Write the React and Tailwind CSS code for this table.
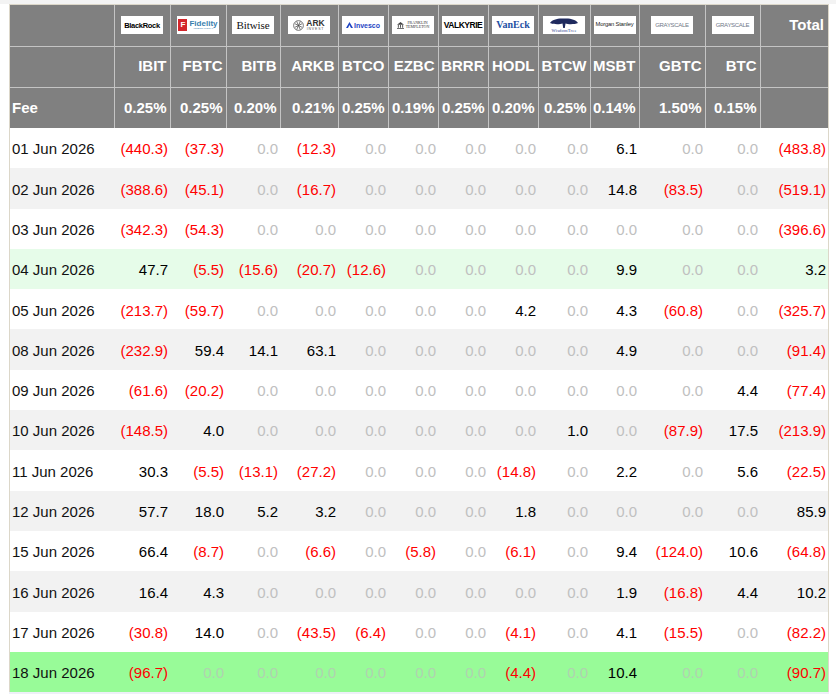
const funds = [
  { ticker: "IBIT", fee: "0.25%", w: "w-[56px]", logo: "blackrock" },
  { ticker: "FBTC", fee: "0.25%", w: "w-[56px]", logo: "fidelity" },
  { ticker: "BITB", fee: "0.20%", w: "w-[54px]", logo: "bitwise" },
  { ticker: "ARKB", fee: "0.21%", w: "w-[58px]", logo: "ark" },
  { ticker: "BTCO", fee: "0.25%", w: "w-[50px]", logo: "invesco" },
  { ticker: "EZBC", fee: "0.19%", w: "w-[50px]", logo: "franklin" },
  { ticker: "BRRR", fee: "0.25%", w: "w-[50px]", logo: "valkyrie" },
  { ticker: "HODL", fee: "0.20%", w: "w-[50px]", logo: "vaneck" },
  { ticker: "BTCW", fee: "0.25%", w: "w-[52px]", logo: "wisdomtree" },
  { ticker: "MSBT", fee: "0.14%", w: "w-[49px]", logo: "morgan" },
  { ticker: "GBTC", fee: "1.50%", w: "w-[66px]", logo: "grayscale" },
  { ticker: "BTC", fee: "0.15%", w: "w-[55px]", logo: "grayscale" },
];

// date, 12 funds, total
const rows = [
  ["01 Jun 2026", "(440.3)", "(37.3)", "0.0", "(12.3)", "0.0", "0.0", "0.0", "0.0", "0.0", "6.1", "0.0", "0.0", "(483.8)"],
  ["02 Jun 2026", "(388.6)", "(45.1)", "0.0", "(16.7)", "0.0", "0.0", "0.0", "0.0", "0.0", "14.8", "(83.5)", "0.0", "(519.1)"],
  ["03 Jun 2026", "(342.3)", "(54.3)", "0.0", "0.0", "0.0", "0.0", "0.0", "0.0", "0.0", "0.0", "0.0", "0.0", "(396.6)"],
  ["04 Jun 2026", "47.7", "(5.5)", "(15.6)", "(20.7)", "(12.6)", "0.0", "0.0", "0.0", "0.0", "9.9", "0.0", "0.0", "3.2"],
  ["05 Jun 2026", "(213.7)", "(59.7)", "0.0", "0.0", "0.0", "0.0", "0.0", "4.2", "0.0", "4.3", "(60.8)", "0.0", "(325.7)"],
  ["08 Jun 2026", "(232.9)", "59.4", "14.1", "63.1", "0.0", "0.0", "0.0", "0.0", "0.0", "4.9", "0.0", "0.0", "(91.4)"],
  ["09 Jun 2026", "(61.6)", "(20.2)", "0.0", "0.0", "0.0", "0.0", "0.0", "0.0", "0.0", "0.0", "0.0", "4.4", "(77.4)"],
  ["10 Jun 2026", "(148.5)", "4.0", "0.0", "0.0", "0.0", "0.0", "0.0", "0.0", "1.0", "0.0", "(87.9)", "17.5", "(213.9)"],
  ["11 Jun 2026", "30.3", "(5.5)", "(13.1)", "(27.2)", "0.0", "0.0", "0.0", "(14.8)", "0.0", "2.2", "0.0", "5.6", "(22.5)"],
  ["12 Jun 2026", "57.7", "18.0", "5.2", "3.2", "0.0", "0.0", "0.0", "1.8", "0.0", "0.0", "0.0", "0.0", "85.9"],
  ["15 Jun 2026", "66.4", "(8.7)", "0.0", "(6.6)", "0.0", "(5.8)", "0.0", "(6.1)", "0.0", "9.4", "(124.0)", "10.6", "(64.8)"],
  ["16 Jun 2026", "16.4", "4.3", "0.0", "0.0", "0.0", "0.0", "0.0", "0.0", "0.0", "1.9", "(16.8)", "4.4", "10.2"],
  ["17 Jun 2026", "(30.8)", "14.0", "0.0", "(43.5)", "(6.4)", "0.0", "0.0", "(4.1)", "0.0", "4.1", "(15.5)", "0.0", "(82.2)"],
  ["18 Jun 2026", "(96.7)", "0.0", "0.0", "0.0", "0.0", "0.0", "0.0", "(4.4)", "0.0", "10.4", "0.0", "0.0", "(90.7)"],
];

const LogoBox = ({ children }) => (
  <div className="mx-auto flex h-[18px] w-[42px] items-center justify-center overflow-hidden bg-white font-normal leading-none">
    {children}
  </div>
);

const Logo = ({ name }) => {
  if (name === "blackrock")
    return (
      <LogoBox>
        <span className="text-[7.5px] font-bold tracking-[-0.3px] text-black">BlackRock</span>
      </LogoBox>
    );
  if (name === "fidelity")
    return (
      <LogoBox>
        <div className="flex items-center gap-[2px]">
          <div className="flex h-[12px] w-[9px] items-center justify-center bg-[#d3262b] text-[8px] font-bold text-white">F</div>
          <div className="flex flex-col">
            <span className="text-[8px] font-bold text-[#3a7fae]">Fidelity</span>
            <span className="text-[2.5px] text-[#3a7fae]">INTERNATIONAL</span>
          </div>
        </div>
      </LogoBox>
    );
  if (name === "bitwise")
    return (
      <LogoBox>
        <span className="font-['Liberation_Serif',serif] text-[11px] tracking-[-0.1px] text-[#111]">Bitwise</span>
      </LogoBox>
    );
  if (name === "ark")
    return (
      <LogoBox>
        <div className="flex items-center gap-[2px]">
          <svg width="11" height="11" viewBox="0 0 12 12" fill="none" stroke="#444" strokeWidth="0.8">
            <circle cx="6" cy="6" r="5.3" />
            <path d="M2 4l8 4M2 8l8-4M4 1.5l4 9M8 1.5l-4 9" />
          </svg>
          <div className="flex flex-col items-center">
            <span className="text-[8.5px] font-semibold text-[#333]">ARK</span>
            <span className="text-[3.5px] tracking-[0.8px] text-[#555]">INVEST</span>
          </div>
        </div>
      </LogoBox>
    );
  if (name === "invesco")
    return (
      <LogoBox>
        <div className="flex items-center gap-[1px]">
          <svg width="7" height="6" viewBox="0 0 7 6" fill="#1f45c4">
            <path d="M0 6L3.5 0 7 6h-2L3.5 3 2 6z" />
          </svg>
          <span className="text-[7px] font-bold text-[#1f45c4]">Invesco</span>
        </div>
      </LogoBox>
    );
  if (name === "franklin")
    return (
      <LogoBox>
        <div className="flex items-center gap-[2px]">
          <svg width="7" height="7" viewBox="0 0 8 8" fill="#444">
            <path d="M0 3L4 0 8 3z M1 3.5h1v3H1z M3.5 3.5h1v3h-1z M6 3.5h1v3H6z M0 7h8v1H0z" />
          </svg>
          <div className="flex flex-col font-['Liberation_Serif',serif] text-[4px] text-[#333]">
            <span>FRANKLIN</span>
            <span>TEMPLETON</span>
          </div>
        </div>
      </LogoBox>
    );
  if (name === "valkyrie")
    return (
      <LogoBox>
        <span className="text-[8.5px] font-bold tracking-[-0.5px] text-black">VALKYRIE</span>
      </LogoBox>
    );
  if (name === "vaneck")
    return (
      <LogoBox>
        <span className="font-['Liberation_Serif',serif] text-[10px] font-bold text-[#1e4fa3]">VanEck</span>
      </LogoBox>
    );
  if (name === "wisdomtree")
    return (
      <LogoBox>
        <div className="flex flex-col items-center gap-[1px]">
          <svg width="30" height="10" viewBox="0 0 30 10" fill="#1f2a5e">
            <path d="M1 5C3 1.5 9 0 15 0.5 21 0 27 1.5 29 5 26 6.5 19 6.5 16.5 5.5L15.8 10h-1.6L13.5 5.5C11 6.5 4 6.5 1 5z" />
          </svg>
          <span className="font-['Liberation_Serif',serif] text-[4.5px] tracking-[0.2px] text-[#2f3f8f]">WisdomTree</span>
        </div>
      </LogoBox>
    );
  if (name === "morgan")
    return (
      <LogoBox>
        <span className="text-[5.8px] tracking-[-0.2px] text-[#222]">Morgan Stanley</span>
      </LogoBox>
    );
  return (
    <LogoBox>
      <span className="text-[6px] tracking-[-0.3px] text-[#6f7888]">GRAYSCALE</span>
    </LogoBox>
  );
};

const valueColor = (v, lastRow) => {
  if (v.startsWith("(")) return "text-[#ff0000]";
  if (v === "0.0") return lastRow ? "text-[#b0d2b0]" : "text-[#c0c0c0]";
  return "text-black";
};

const rowBg = (i) => {
  if (i === 3) return "bg-[#e6fce9]";
  if (i === 13) return "bg-[#98fb98]";
  return i % 2 === 1 ? "bg-[#f2f2f2]" : "bg-white";
};

export default function App() {
  return (
    <div className="min-h-screen bg-white font-['Liberation_Sans',Arial,sans-serif]">
      <div className="h-[4px] bg-[#f3f3f3]" />
      <div className="ml-[9px] w-[820px] border-x border-t border-[#dcd7c9]">
        <table className="w-full table-fixed border-collapse text-[15px]">
          <colgroup>
            <col className="w-[104px]" />
            {funds.map((f) => (
              <col key={f.ticker} className={f.w} />
            ))}
            <col className="w-[68px]" />
          </colgroup>
          <thead className="bg-[#808080] font-bold text-white">
            <tr className="h-[41px]">
              <th className="border-b border-r border-[#c4c4c4]" />
              {funds.map((f) => (
                <th key={f.ticker} className="border-b border-r border-[#c4c4c4] px-0">
                  <Logo name={f.logo} />
                </th>
              ))}
              <th className="border-b border-[#c4c4c4] pr-[4px] text-right">Total</th>
            </tr>
            <tr className="h-[41px]">
              <th className="border-b border-r border-[#c4c4c4]" />
              {funds.map((f) => (
                <th key={f.ticker} className="border-b border-r border-[#c4c4c4] pr-[3px] text-right">
                  {f.ticker}
                </th>
              ))}
              <th className="border-b border-[#c4c4c4]" />
            </tr>
            <tr className="h-[41px]">
              <th className="border-r border-[#c4c4c4] pl-[2px] text-left">Fee</th>
              {funds.map((f) => (
                <th key={f.ticker} className="border-r border-[#c4c4c4] pr-[3px] text-right">
                  {f.fee}
                </th>
              ))}
              <th />
            </tr>
          </thead>
          <tbody>
            {rows.map((r, i) => (
              <tr key={r[0]} className={"h-[40.3px] " + rowBg(i)}>
                <td className="pl-[2px] pt-[3px] text-left text-[#111]">{r[0]}</td>
                {r.slice(1).map((v, j) => (
                  <td key={j} className={"pr-[2px] pt-[3px] text-right " + valueColor(v, i === 13)}>
                    {v}
                  </td>
                ))}
              </tr>
            ))}
          </tbody>
        </table>
      </div>
      <div className="ml-[9px] h-[20px] w-[820px] bg-[#eef0f8]" />
    </div>
  );
}
